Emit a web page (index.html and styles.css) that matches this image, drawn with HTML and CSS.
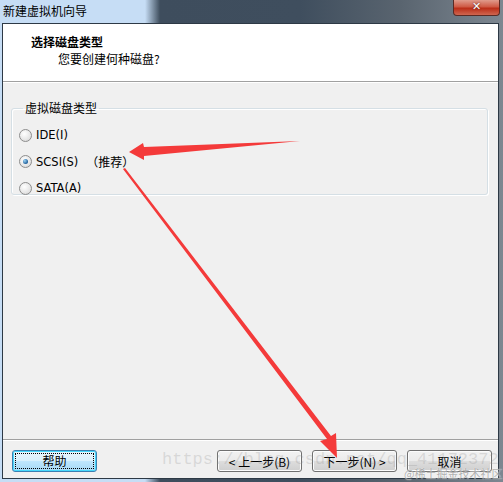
FILE: index.html
```html
<!DOCTYPE html>
<html lang="zh-CN">
<head>
    <meta charset="UTF-8">
    <title>新建虚拟机向导</title>
    <link rel="stylesheet" href="styles.css">
</head>
<body>
    <div class="window">
        <div class="titlebar">
            <span class="title">新建虚拟机向导</span>
            <span class="close">✕</span>
        </div>
        <div class="client">
            <div class="header">
                <div class="head-title">选择磁盘类型</div>
                <div class="head-sub">您要创建何种磁盘?</div>
            </div>
            <div class="body">
                <fieldset class="group">
                    <legend>虚拟磁盘类型</legend>
                    <label class="option"><span class="radio"></span>IDE(I)</label>
                    <label class="option"><span class="radio checked"></span>SCSI(S)<span class="hint">（推荐）</span></label>
                    <label class="option"><span class="radio"></span>SATA(A)</label>
                </fieldset>
            </div>
            <div class="footer">
                <button class="btn default"><span class="focus">帮助</span></button>
                <div class="nav">
                    <button class="btn">&lt; 上一步(B)</button>
                    <button class="btn">下一步(N) &gt;</button>
                    <button class="btn">取消</button>
                </div>
            </div>
        </div>
    </div>

    <div class="watermark">https://blog.csdn.net/qq_41172372</div>
    <div class="credit">@稀土掘金技术社区</div>

    <svg class="arrows" width="503" height="482" viewBox="0 0 503 482">
        <polygon points="300,141 144,147 143,143 129,152 144,160 144,156" fill="#f43a3a"/>
        <polygon points="123,169 125,168 331,436 336,433 337,458 320,441 327,439" fill="#f43a3a"/>
    </svg>
</body>
</html>
```

FILE: styles.css
```css
* {
    box-sizing: border-box;
}

body {
    margin: 0;
    width: 503px;
    height: 482px;
    overflow: hidden;
    font-family: "Noto Sans CJK SC", sans-serif;
    font-size: 12px;
    color: #000;
    position: relative;
}

.window {
    height: 482px;
    display: flex;
    flex-direction: column;
    background: linear-gradient(to right, #c6ddf5 0, #c6ddf5 145px, #3e4d5d 160px, #3f4e5e 300px, #59646f 400px, #7d8791 100%);
}

.titlebar {
    height: 23px;
    flex: none;
    display: flex;
    justify-content: space-between;
    align-items: flex-start;
}

.title {
    padding: 2px 0 0 3px;
    line-height: 18px;
    color: #000;
}

.close {
    width: 47px;
    height: 16px;
    margin-right: 3px;
    border: 1px solid #5a2a24;
    border-top: none;
    border-radius: 0 0 4px 4px;
    background: linear-gradient(#e09b8c, #cf5a45 45%, #bb2e18 55%, #cf6650);
    color: #fff;
    font-family: "DejaVu Sans", sans-serif;
    font-size: 11px;
    font-weight: bold;
    text-align: center;
    line-height: 14px;
    text-shadow: 0 0 2px #4a1a12;
}

.client {
    flex: 1;
    margin: 0 4px 3px 2px;
    border: 1px solid #2d3945;
    background: #f0f0f0;
    display: flex;
    flex-direction: column;
}

.header {
    height: 58px;
    flex: none;
    background: #fff;
    border-bottom: 1px solid #a0a0a0;
    box-shadow: 0 1px 0 #fff;
    padding-left: 28px;
}

.head-title {
    font-weight: bold;
    margin-top: 9px;
    line-height: 17px;
}

.head-sub {
    padding-left: 27px;
    line-height: 17px;
}

.body {
    flex: 1;
    padding: 18px 10px 0 8px;
}

.group {
    margin: 0;
    padding: 6px 0 0 7px;
    height: 95px;
    border: 1px solid #d5dfe5;
    border-radius: 3px;
    box-shadow: inset 1px 1px 0 #fff, 1px 1px 0 #fff;
}

.group legend {
    padding: 0 2px;
    margin-left: 4px;
    line-height: 16px;
}

.option {
    display: flex;
    align-items: center;
    height: 26.5px;
    font-family: "DejaVu Sans", sans-serif;
    font-size: 11.5px;
}

.radio {
    width: 13px;
    height: 13px;
    border: 1px solid #8d8d8d;
    border-radius: 50%;
    background: radial-gradient(circle at 40% 35%, #fff 0, #e6e6e6 60%, #cfcfcf 100%);
    margin-right: 4px;
    position: relative;
}

.radio.checked::after {
    content: "";
    position: absolute;
    left: 3px;
    top: 3px;
    width: 5px;
    height: 5px;
    border-radius: 50%;
    background: radial-gradient(circle at 35% 35%, #9cd3f5, #1f5f9a 70%);
}

.hint {
    margin-left: 8px;
    font-family: "Noto Sans CJK SC", sans-serif;
    font-size: 12px;
}

.footer {
    height: 39px;
    flex: none;
    border-top: 1px solid #a0a0a0;
    box-shadow: inset 0 1px 0 #fff;
    display: flex;
    justify-content: space-between;
    align-items: flex-start;
    padding: 10px 6px 0 9px;
}

.nav {
    display: flex;
    gap: 10px;
}

.btn {
    width: 85px;
    height: 22px;
    padding: 0;
    border: 1px solid #707070;
    border-radius: 3px;
    background: linear-gradient(#f2f2f2, #ebebeb 48%, #dddddd 52%, #cfcfcf);
    box-shadow: inset 0 0 0 1px #fcfcfc;
    font-family: "Noto Sans CJK SC", sans-serif;
    font-size: 12px;
    color: #000;
}

.btn.default {
    border-color: #3c7fb1;
    background: linear-gradient(#eaf6fd, #d9f0fc 48%, #bee6fd 52%, #a7d9f5);
    box-shadow: inset 0 0 0 1px #48d8fb;
    padding: 2px;
}

.focus {
    display: block;
    height: 16px;
    line-height: 14px;
    border: 1px dotted #000;
}

.watermark {
    position: absolute;
    left: 162px;
    top: 450px;
    font-family: "Liberation Mono", monospace;
    font-size: 17px;
    color: rgba(140, 140, 140, 0.25);
    pointer-events: none;
}

.credit {
    position: absolute;
    left: 404px;
    top: 465px;
    font-size: 11px;
    color: rgba(110, 110, 110, 0.55);
    text-shadow: 0 0 1px #fff;
}

.arrows {
    position: absolute;
    left: 0;
    top: 0;
}
```
